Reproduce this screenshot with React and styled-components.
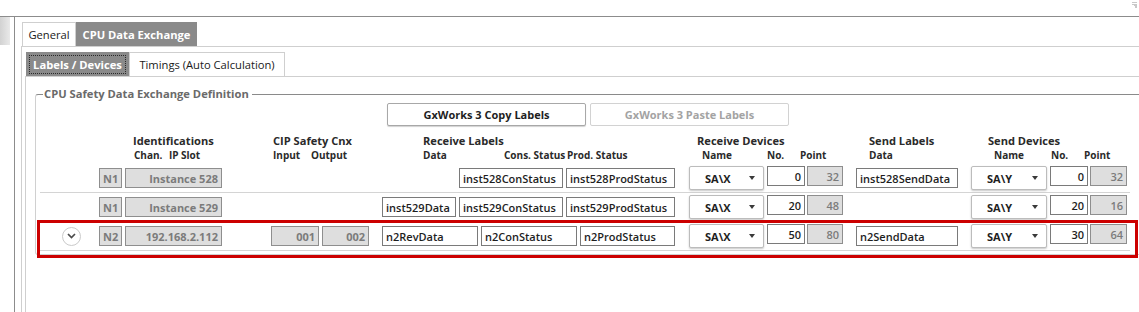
import React from "react";
import styled, { createGlobalStyle } from "styled-components";

const GlobalStyle = createGlobalStyle`
  body {
    margin: 0;
    background: #ffffff;
  }
  * {
    box-sizing: border-box;
  }
`;

const rows = [
  {
    id: 1,
    chan: "N1",
    ip: "Instance 528",
    cip: null,
    recvLabels: [
      { text: "inst528ConStatus", width: 104 },
      { text: "inst528ProdStatus", width: 109 },
    ],
    recvDevice: { name: "SA\\X", no: 0, point: 32 },
    sendLabel: "inst528SendData",
    sendDevice: { name: "SA\\Y", no: 0, point: 32 },
  },
  {
    id: 2,
    chan: "N1",
    ip: "Instance 529",
    cip: null,
    recvLabels: [
      { text: "inst529Data", width: 74 },
      { text: "inst529ConStatus", width: 104 },
      { text: "inst529ProdStatus", width: 109 },
    ],
    recvDevice: { name: "SA\\X", no: 20, point: 48 },
    sendLabel: null,
    sendDevice: { name: "SA\\Y", no: 20, point: 16 },
  },
  {
    id: 3,
    expandable: true,
    highlighted: true,
    chan: "N2",
    ip: "192.168.2.112",
    cip: { input: "001", output: "002" },
    recvLabels: [
      { text: "n2RevData", width: 96 },
      { text: "n2ConStatus", width: 96 },
      { text: "n2ProdStatus", width: 95 },
    ],
    recvDevice: { name: "SA\\X", no: 50, point: 80 },
    sendLabel: "n2SendData",
    sendDevice: { name: "SA\\Y", no: 30, point: 64 },
  },
];

const Root = styled.div`
  width: 1139px;
  height: 312px;
  overflow: hidden;
  background: #ffffff;
  font-family: "Open Sans", "Noto Sans", sans-serif;
  font-size: 11px;
  color: #1e1e1e;
  display: flex;
  flex-direction: column;
`;

const TopStrip = styled.div`
  height: 17px;
  flex: none;
  border-bottom: 1px solid #8c8c8c;
  display: flex;
  justify-content: flex-end;
  padding: 2px 2px 0 0;
`;

const Body = styled.div`
  flex: 1;
  display: flex;
  min-height: 0;
`;

const SidePane = styled.div`
  width: 15px;
  flex: none;
  border-right: 1px solid #8c8c8c;
`;

const SideBlock = styled.div`
  width: 10px;
  height: 28px;
  background: linear-gradient(to right, #d2d2d2, #e9e9e9);
`;

const MainArea = styled.div`
  flex: 1;
  padding: 5px 0 0 6px;
  display: flex;
  flex-direction: column;
  min-width: 0;
`;

const TabStrip = styled.div`
  display: flex;
  height: 24px;
  flex: none;
  padding-left: ${(p) => p.$indent}px;
`;

const Tab = styled.div`
  width: ${(p) => p.$w}px;
  height: 24px;
  flex: none;
  display: flex;
  align-items: center;
  justify-content: center;
  font-size: 11.2px;
  white-space: nowrap;
  background: ${(p) => (p.$active ? "#8a8a8a" : "#ffffff")};
  color: ${(p) => (p.$active ? "#ffffff" : "#1a1a1a")};
  font-weight: ${(p) => (p.$active ? 700 : 400)};
  border: 1px solid ${(p) => (p.$active ? "#8a8a8a" : "#cfcfcf")};
  border-bottom: none;
`;

const FocusRing = styled.span`
  align-self: stretch;
  flex: 1;
  margin: 2px;
  display: flex;
  align-items: center;
  justify-content: center;
  border: 1px dotted #2a2a2a;
`;

const TabPanel = styled.div`
  flex: 1;
  border-left: 1px solid #cfcfcf;
  border-top: 1px solid #cfcfcf;
  padding: ${(p) => p.$pad};
  display: flex;
  flex-direction: column;
  min-height: 0;
`;

const GroupBox = styled.fieldset`
  margin: 9px -30px 0 9px;
  padding: 0 0 3px 4px;
  border: 1px solid #d0d0d0;
  border-top-color: #8a8a8a;
  border-radius: 3px;
  min-width: 0;
`;

const Legend = styled.legend`
  margin-left: 3px;
  padding: 0 3px 0 1px;
  font-size: 11.2px;
  line-height: 16px;
  font-weight: 700;
  color: #6a6a6a;
`;

const ButtonRow = styled.div`
  display: flex;
  gap: 4px;
  margin: 1px 0 0 347px;
`;

const ToolButton = styled.button`
  width: 199px;
  height: 23px;
  font-family: inherit;
  font-size: 11px;
  font-weight: 700;
  background: #ffffff;
  border: 1px solid ${(p) => (p.disabled ? "#d2d2d2" : "#a8a8a8")};
  border-radius: 2px;
  box-shadow: ${(p) => (p.disabled ? "none" : "0 1px 1px rgba(0,0,0,0.18)")};
  color: ${(p) => (p.disabled ? "#a3a3a3" : "#1e1e1e")};
  padding: 0;
`;

const HeaderRow = styled.div`
  display: flex;
  margin: 7px 0 0 93px;
  height: 31px;
`;

const HeaderBlock = styled.div`
  width: ${(p) => p.$w}px;
  flex: none;
  display: flex;
  flex-direction: column;
`;

const HeaderTitle = styled.div`
  font-size: 11.1px;
  font-weight: 700;
  line-height: 16px;
  color: #2a2a2a;
  white-space: nowrap;
`;

const SubLabels = styled.div`
  display: flex;
  padding-left: ${(p) => p.$indent || 0}px;
`;

const SubLabel = styled.span`
  width: ${(p) => (p.$w ? `${p.$w}px` : "auto")};
  flex: none;
  font-size: 10px;
  font-weight: 700;
  line-height: 13px;
  color: #2a2a2a;
  white-space: nowrap;
`;

const Row = styled.div`
  position: relative;
  display: flex;
  align-items: center;
  width: 1090px;
  height: 29px;
  border-bottom: 1px solid #d4d4d4;
`;

const ExpandCell = styled.div`
  width: 59px;
  flex: none;
  padding-left: 22px;
  display: flex;
  align-items: center;
`;

const ExpandButton = styled.div`
  width: 19px;
  height: 19px;
  border-radius: 50%;
  border: 1px solid #cacaca;
  background: #ffffff;
  display: flex;
  align-items: center;
  justify-content: center;
`;

const Group = styled.div`
  display: flex;
  flex: none;
  gap: ${(p) => p.$gap ?? 3}px;
  margin-left: ${(p) => p.$ml || 0}px;
  width: ${(p) => (p.$w ? `${p.$w}px` : "auto")};
  justify-content: ${(p) => (p.$end ? "flex-end" : "flex-start")};
`;

const Field = styled.div`
  width: ${(p) => p.$w}px;
  height: 20px;
  flex: none;
  display: flex;
  align-items: center;
  justify-content: ${(p) => (p.$right ? "flex-end" : "flex-start")};
  padding: 0 3px;
  margin-left: ${(p) => p.$ml || 0}px;
  border: 1px solid ${(p) => (p.$readOnly ? "#8e8e8e" : "#7a7a7a")};
  background: ${(p) => (p.$readOnly ? "#dedede" : "#ffffff")};
  color: ${(p) => (p.$readOnly ? "#7b7b7b" : "#1e1e1e")};
  font-weight: ${(p) => p.$weight || (p.$readOnly ? 700 : 600)};
  font-size: 11px;
  white-space: nowrap;
  overflow: hidden;
`;

const Dropdown = styled.div`
  width: ${(p) => p.$w}px;
  height: 24px;
  flex: none;
  display: flex;
  align-items: center;
  justify-content: space-between;
  padding: 0 8px 0 15px;
  background: #ffffff;
  border: 1px solid #bcbcbc;
  border-radius: 2px;
  box-shadow: 0 1px 2px rgba(0, 0, 0, 0.22);
  font-weight: 700;
  font-size: 11px;
  color: #1e1e1e;
`;

const Caret = styled.span`
  width: 0;
  height: 0;
  border-left: 3.5px solid transparent;
  border-right: 3.5px solid transparent;
  border-top: 4px solid #3a3a3a;
`;

const Highlight = styled.div`
  position: absolute;
  left: -3px;
  top: -2px;
  right: -8px;
  bottom: -8px;
  border: 3px solid #cc0000;
  pointer-events: none;
`;

const PinIcon = () => (
  <svg width="5" height="7" viewBox="0 0 5 7">
    <rect x="0" y="0" width="5" height="1" fill="#c8c8c8" />
    <rect x="0" y="2" width="5" height="1" fill="#c8c8c8" />
    <rect x="2" y="3" width="3" height="1" fill="#c8c8c8" />
    <rect x="3" y="4" width="2" height="2" fill="#c8c8c8" />
  </svg>
);

const Chevron = () => (
  <svg width="9" height="6" viewBox="0 0 9 6">
    <path d="M1 1 L4.5 4.5 L8 1" fill="none" stroke="#4a4a4a" strokeWidth="1.7" />
  </svg>
);

const DeviceGroup = ({ device, nameWidth, pointWidth, ml }) => (
  <Group $ml={ml} $gap={0}>
    <Dropdown $w={nameWidth}>
      {device.name}
      <Caret />
    </Dropdown>
    <Field $w={38} $right $ml={3}>
      {device.no}
    </Field>
    <Field $w={pointWidth} $right $readOnly $ml={2} $weight={600}>
      {device.point}
    </Field>
  </Group>
);

const ExchangeRow = ({ row }) => (
  <Row>
    <ExpandCell>
      {row.expandable && (
        <ExpandButton>
          <Chevron />
        </ExpandButton>
      )}
    </ExpandCell>
    <Group>
      <Field $w={23} $readOnly>{row.chan}</Field>
      <Field $w={97} $readOnly $right>{row.ip}</Field>
    </Group>
    <Group $ml={49} $w={98}>
      {row.cip && (
        <>
          <Field $w={48} $readOnly $right>{row.cip.input}</Field>
          <Field $w={47} $readOnly $right>{row.cip.output}</Field>
        </>
      )}
    </Group>
    <Group $ml={13} $w={293} $end>
      {row.recvLabels.map((label) => (
        <Field key={label.text} $w={label.width}>{label.text}</Field>
      ))}
    </Group>
    <DeviceGroup device={row.recvDevice} nameWidth={75} pointWidth={36} ml={14} />
    <Group $ml={13} $w={102}>
      {row.sendLabel && <Field $w={102}>{row.sendLabel}</Field>}
    </Group>
    <DeviceGroup device={row.sendDevice} nameWidth={76} pointWidth={37} ml={13} />
    {row.highlighted && <Highlight />}
  </Row>
);

const App = () => (
  <Root>
    <GlobalStyle />
    <TopStrip>
      <PinIcon />
    </TopStrip>
    <Body>
      <SidePane>
        <SideBlock />
      </SidePane>
      <MainArea>
        <TabStrip $indent={1}>
          <Tab $w={54}>General</Tab>
          <Tab $w={121} $active>CPU Data Exchange</Tab>
        </TabStrip>
        <TabPanel $pad="5px 0 0 3px">
          <TabStrip $indent={1}>
            <Tab $w={103} $active>
              <FocusRing>Labels / Devices</FocusRing>
            </Tab>
            <Tab $w={156}>Timings (Auto Calculation)</Tab>
          </TabStrip>
          <TabPanel $pad="0">
            <GroupBox>
              <Legend>CPU Safety Data Exchange Definition</Legend>
              <ButtonRow>
                <ToolButton>GxWorks 3 Copy Labels</ToolButton>
                <ToolButton disabled>GxWorks 3 Paste Labels</ToolButton>
              </ButtonRow>
              <HeaderRow>
                <HeaderBlock $w={140}>
                  <HeaderTitle>Identifications</HeaderTitle>
                  <SubLabels $indent={1}>
                    <SubLabel $w={35}>Chan.</SubLabel>
                    <SubLabel $w={12}>IP</SubLabel>
                    <SubLabel>Slot</SubLabel>
                  </SubLabels>
                </HeaderBlock>
                <HeaderBlock $w={150}>
                  <HeaderTitle>CIP Safety Cnx</HeaderTitle>
                  <SubLabels>
                    <SubLabel $w={38}>Input</SubLabel>
                    <SubLabel>Output</SubLabel>
                  </SubLabels>
                </HeaderBlock>
                <HeaderBlock $w={274}>
                  <HeaderTitle>Receive Labels</HeaderTitle>
                  <SubLabels>
                    <SubLabel $w={81}>Data</SubLabel>
                    <SubLabel $w={63}>Cons. Status</SubLabel>
                    <SubLabel>Prod. Status</SubLabel>
                  </SubLabels>
                </HeaderBlock>
                <HeaderBlock $w={172}>
                  <HeaderTitle>Receive Devices</HeaderTitle>
                  <SubLabels $indent={5}>
                    <SubLabel $w={65}>Name</SubLabel>
                    <SubLabel $w={33}>No.</SubLabel>
                    <SubLabel>Point</SubLabel>
                  </SubLabels>
                </HeaderBlock>
                <HeaderBlock $w={119}>
                  <HeaderTitle>Send Labels</HeaderTitle>
                  <SubLabels>
                    <SubLabel>Data</SubLabel>
                  </SubLabels>
                </HeaderBlock>
                <HeaderBlock $w={150}>
                  <HeaderTitle>Send Devices</HeaderTitle>
                  <SubLabels $indent={6}>
                    <SubLabel $w={57}>Name</SubLabel>
                    <SubLabel $w={33}>No.</SubLabel>
                    <SubLabel>Point</SubLabel>
                  </SubLabels>
                </HeaderBlock>
              </HeaderRow>
              {rows.map((row) => (
                <ExchangeRow key={row.id} row={row} />
              ))}
            </GroupBox>
          </TabPanel>
        </TabPanel>
      </MainArea>
    </Body>
  </Root>
);

export default App;
